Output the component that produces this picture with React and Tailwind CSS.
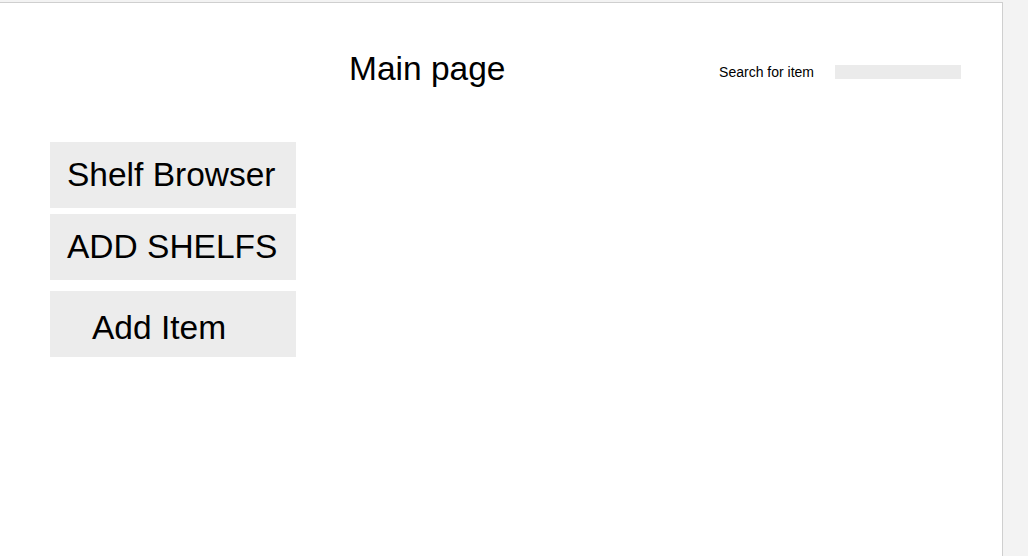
import React from 'react';

const btn = 'w-[246px] h-[66px] flex items-center bg-[#ececec] text-[33.5px] leading-[38px] text-black';

export default function App() {
  return (
    <div className="h-screen bg-[#f3f3f3] pt-[2px] font-['Liberation_Sans',Arial,sans-serif]">
      <div className="w-[1003px] h-full bg-white border-t border-r border-[#cfcfcf]">
        <div className="flex items-start pt-[47px] pl-[349px] pr-[41px]">
          <h1 className="text-[33.5px] leading-[38px] text-black">Main page</h1>
          <div className="ml-auto mt-[14px] flex items-center">
            <span className="text-[14px] leading-[16px] text-black">Search for item</span>
            <input className="ml-[21px] w-[126px] h-[14px] bg-[#ebebeb] outline-none" />
          </div>
        </div>
        <div className="mt-[54px] ml-[50px] flex flex-col">
          <button className={`${btn} pl-[17px]`}>Shelf Browser</button>
          <button className={`${btn} pl-[17px] mt-[6px]`}>ADD SHELFS</button>
          <button className={`${btn} pl-[42px] pt-[8px] mt-[11px]`}>Add Item</button>
        </div>
      </div>
    </div>
  );
}
